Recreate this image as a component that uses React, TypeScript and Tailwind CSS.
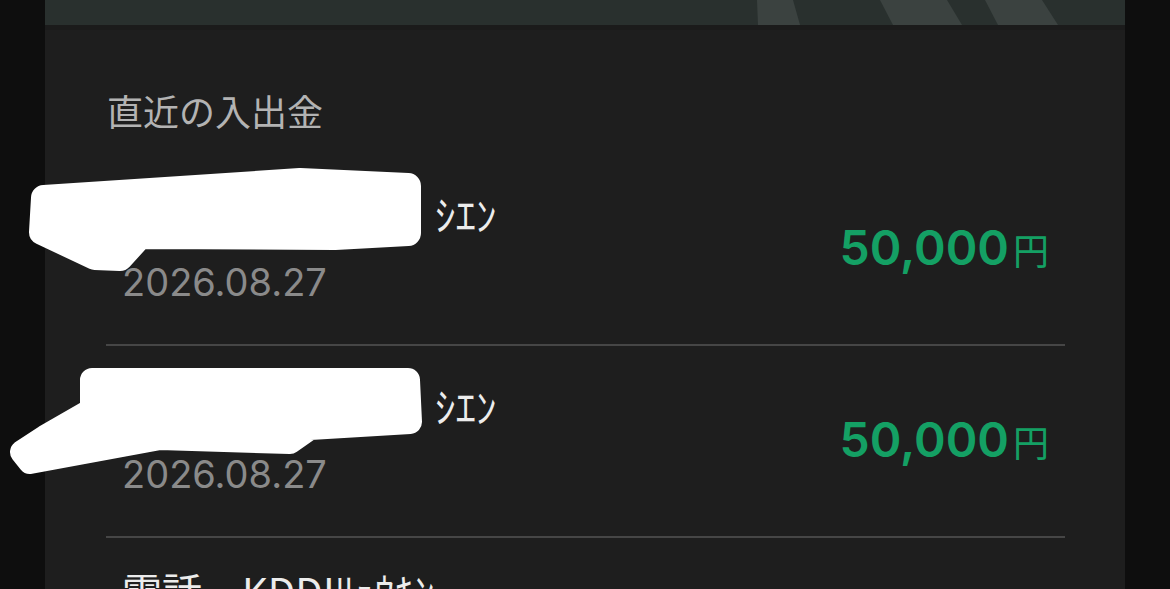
import React from "react";

const jp = "font-['Noto_Sans_CJK_JP','Noto_Sans',sans-serif]";
const num = "font-['Inter','Roboto',sans-serif]";

type Tx = { prefix: string; name: string; date: string; amount: string };

const txs: Tx[] = [
  { prefix: "", name: "ｼｴﾝ", date: "2026.08.27", amount: "50,000" },
  { prefix: "", name: "ｼｴﾝ", date: "2026.08.27", amount: "50,000" },
];

function Banner() {
  return (
    <div className="relative h-[25px] bg-[#29302e] overflow-hidden">
      <svg className="absolute inset-0" width="1080" height="25" viewBox="0 0 1080 25">
        <path d="M712 0 L748 0 L755 25 L713 25 Z" fill="#3b4240" />
        <path d="M835 0 L902 0 L917 25 L848 25 Z" fill="#3b4240" />
        <path d="M940 0 L997 0 L1013 25 L953 25 Z" fill="#3b4240" />
      </svg>
    </div>
  );
}

function Row({ tx }: { tx: Tx }) {
  return (
    <div className="flex items-center justify-between px-[16px] pt-[35px] pb-[38px]">
      <div className="flex flex-col">
        <div className={`${jp} text-[41px] leading-[48px] text-[#ececec] whitespace-nowrap`}>
          <span className="inline-block w-[313px]">{tx.prefix}</span>
          {tx.name}
        </div>
        <div className={`${num} mt-[21px] text-[38px] leading-[48px] text-[#8a8a8a]`}>{tx.date}</div>
      </div>
      <div className="flex items-baseline text-[#14a064]">
        <span className={`${num} text-[48px] font-semibold leading-none`}>{tx.amount}</span>
        <span className={`${jp} ml-[4px] text-[36px] leading-none`}>円</span>
      </div>
    </div>
  );
}

export default function App() {
  return (
    <div className="relative w-[1170px] h-[589px] overflow-hidden bg-[#0e0e0e]">
      <div className="mx-[45px] h-full bg-[#1e1e1e]">
        <Banner />
        <div className="h-[5px] bg-[#1b1b1b]" />
        <div className="pl-[61px] pr-[60px]">
          <h2 className={`${jp} mt-[56px] text-[36px] leading-[48px] text-[#b3b3b3] pl-[1px]`}>直近の入出金</h2>
          <div className="pt-[20px]">
            {txs.map((tx, i) => (
              <div key={i} className="border-b-2 border-[#464646]">
                <Row tx={tx} />
              </div>
            ))}
            <div className={`${jp} px-[16px] pt-[28px] text-[40px] leading-[48px] text-[#ececec] whitespace-nowrap`}>
              電話　KDDIﾘｮｳｷﾝ
            </div>
          </div>
        </div>
      </div>

      {/* redaction marks drawn over the names */}
      <svg className="pointer-events-none absolute inset-0" width="1170" height="589" viewBox="0 0 1170 589">
        <polygon
          points="44,198 300,181 408,186 408,233 335,237 140,236 120,258 95,257 42,232"
          fill="#fff"
          stroke="#fff"
          strokeWidth="26"
          strokeLinejoin="round"
        />
        <polygon
          points="92,380 408,380 410,422 310,428 290,442 160,438 30,462 22,452 45,437 92,410"
          fill="#fff"
          stroke="#fff"
          strokeWidth="24"
          strokeLinejoin="round"
        />
      </svg>
    </div>
  );
}
